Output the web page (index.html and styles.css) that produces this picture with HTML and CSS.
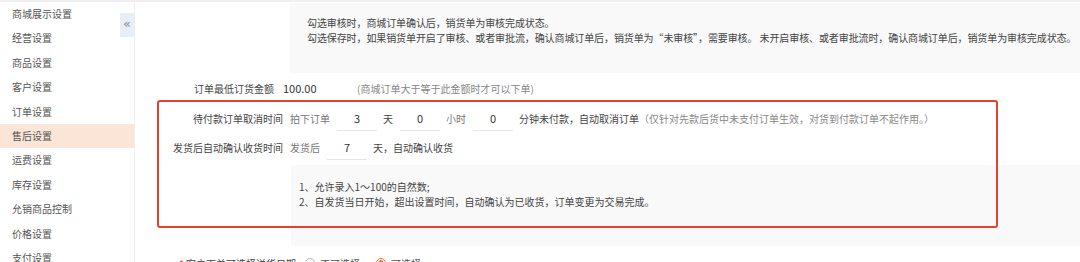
FILE: index.html
```html
<!DOCTYPE html>
<html lang="zh-CN">
<head>
<meta charset="UTF-8">
<title>售后设置</title>
<link rel="stylesheet" href="styles.css">
</head>
<body>

<div class="layout">
  <div class="sidebar">
    <div class="menu-item">商城展示设置</div>
    <div class="menu-item">经营设置</div>
    <div class="menu-item">商品设置</div>
    <div class="menu-item">客户设置</div>
    <div class="menu-item">订单设置</div>
    <div class="menu-item active">售后设置</div>
    <div class="menu-item">运费设置</div>
    <div class="menu-item">库存设置</div>
    <div class="menu-item">允销商品控制</div>
    <div class="menu-item">价格设置</div>
    <div class="menu-item">支付设置</div>
    <div class="collapse">&laquo;</div>
  </div>

  <div class="main">
    <div class="tip-box">
      <p>勾选审核时，商城订单确认后，销货单为审核完成状态。</p>
      <p>勾选保存时，如果销货单开启了审核、或者审批流，确认商城订单后，销货单为“未审核”，需要审核。 未开启审核、或者审批流时，确认商城订单后，销货单为审核完成状态。</p>
    </div>

    <div class="form-row min-row">
      <div class="label label-short">订单最低订货金额</div>
      <div class="value">100.00</div>
      <div class="hint">(商城订单大于等于此金额时才可以下单)</div>
    </div>

    <div class="after-sale">
      <div class="form-row">
        <div class="label">待付款订单取消时间</div>
        <span class="gray-text">拍下订单</span>
        <input class="num-input" value="3">
        <span>天</span>
        <input class="num-input" value="0">
        <span class="gray-text">小时</span>
        <input class="num-input" value="0">
        <span>分钟未付款，自动取消订单</span>
        <span class="hint">（仅针对先款后货中未支付订单生效，对货到付款订单不起作用。）</span>
      </div>
      <div class="form-row">
        <div class="label">发货后自动确认收货时间</div>
        <span class="gray-text">发货后</span>
        <input class="num-input" value="7">
        <span>天，自动确认收货</span>
      </div>
      <div class="note-box">
        <p>1、允许录入1～100的自然数;</p>
        <p>2、自发货当日开始，超出设置时间，自动确认为已收货，订单变更为交易完成。</p>
      </div>
    </div>

    <div class="form-row radio-row">
      <div class="label label-wide"><span class="star">*</span> 客户下单可选择送货日期</div>
      <span class="radio"></span><span class="radio-text">不可选择</span>
      <span class="radio checked"></span><span class="radio-text">可选择</span>
    </div>

    <!-- annotation frame -->
    <div class="mark-frame"></div>
  </div>
</div>

</body>
</html>
```

FILE: styles.css
```css
body {
  margin: 0;
  border-top: 2px solid #f0f0f0;
  font-family: "Noto Sans CJK SC", "Noto Sans", sans-serif;
  font-size: 10px;
  color: #444;
  background: #fff;
  overflow: hidden;
}
p {
  margin: 0;
}
.layout {
  display: flex;
  height: 260px;
}
.sidebar {
  position: relative;
  width: 134px;
  flex-shrink: 0;
  border-right: 1px solid #eee;
}
.menu-item {
  height: 24.4px;
  line-height: 24.4px;
  padding-left: 12px;
  color: #555;
}
.menu-item.active {
  background-color: #fbe5d7;
}
.collapse {
  position: absolute;
  top: 11px;
  right: 0;
  width: 14px;
  height: 24px;
  line-height: 22px;
  text-align: center;
  background-color: #e8eef8;
  color: #8a8f99;
  font-family: "DejaVu Sans", sans-serif;
  font-size: 13px;
}
.main {
  position: relative;
  flex: 1;
  min-width: 0;
  padding-top: 1px;
}
.tip-box {
  margin-left: 155px;
  height: 70px;
  box-sizing: border-box;
  padding: 12px 0 12px 17px;
  line-height: 15px;
  letter-spacing: -0.1px;
  background-color: #f9f9f9;
  color: #444;
  white-space: nowrap;
  overflow: hidden;
}
.form-row {
  display: flex;
  align-items: center;
  height: 29px;
  white-space: nowrap;
}
.min-row {
  height: 30px;
}
.label {
  flex-shrink: 0;
  text-align: right;
  padding-right: 7px;
  box-sizing: border-box;
  width: 155px;
  color: #444;
}
.label-short {
  width: 148px;
  padding-right: 9px;
}
.label-wide {
  width: 170px;
  padding-right: 9px;
}
.value {
  width: 74px;
  color: #333;
  font-size: 11px;
}
.hint {
  color: #888;
}
.gray-text {
  color: #777;
}
.after-sale {
  margin-top: 1px;
}
.num-input {
  width: 40px;
  height: 25px;
  box-sizing: border-box;
  margin: 0 6px 0 7px;
  padding: 0;
  border: none;
  border-bottom: 1px solid #e6e6e6;
  background: transparent;
  text-align: center;
  font-family: inherit;
  font-size: 11px;
  color: #333;
  outline: none;
}
.note-box {
  margin: 3px 0 0 156px;
  height: 81px;
  box-sizing: border-box;
  padding: 14px 8px;
  line-height: 15px;
  background-color: #f9f9f9;
  color: #444;
}
.radio-row {
  margin-top: 2px;
  height: 30px;
}
.star {
  color: #f03c2e;
}
.radio {
  width: 10px;
  height: 10px;
  box-sizing: border-box;
  border: 1px solid #bbb;
  border-radius: 50%;
  margin-right: 5px;
}
.radio.checked {
  border-color: #f46d2a;
  background: radial-gradient(circle, #f46d2a 0 2.5px, #fff 3px);
}
.radio-text {
  margin-right: 16px;
  color: #555;
}
.mark-frame {
  position: absolute;
  left: 22px;
  top: 98px;
  width: 841px;
  height: 128px;
  box-sizing: border-box;
  border: 2.5px solid #e8402f;
  border-radius: 3px;
}
```
